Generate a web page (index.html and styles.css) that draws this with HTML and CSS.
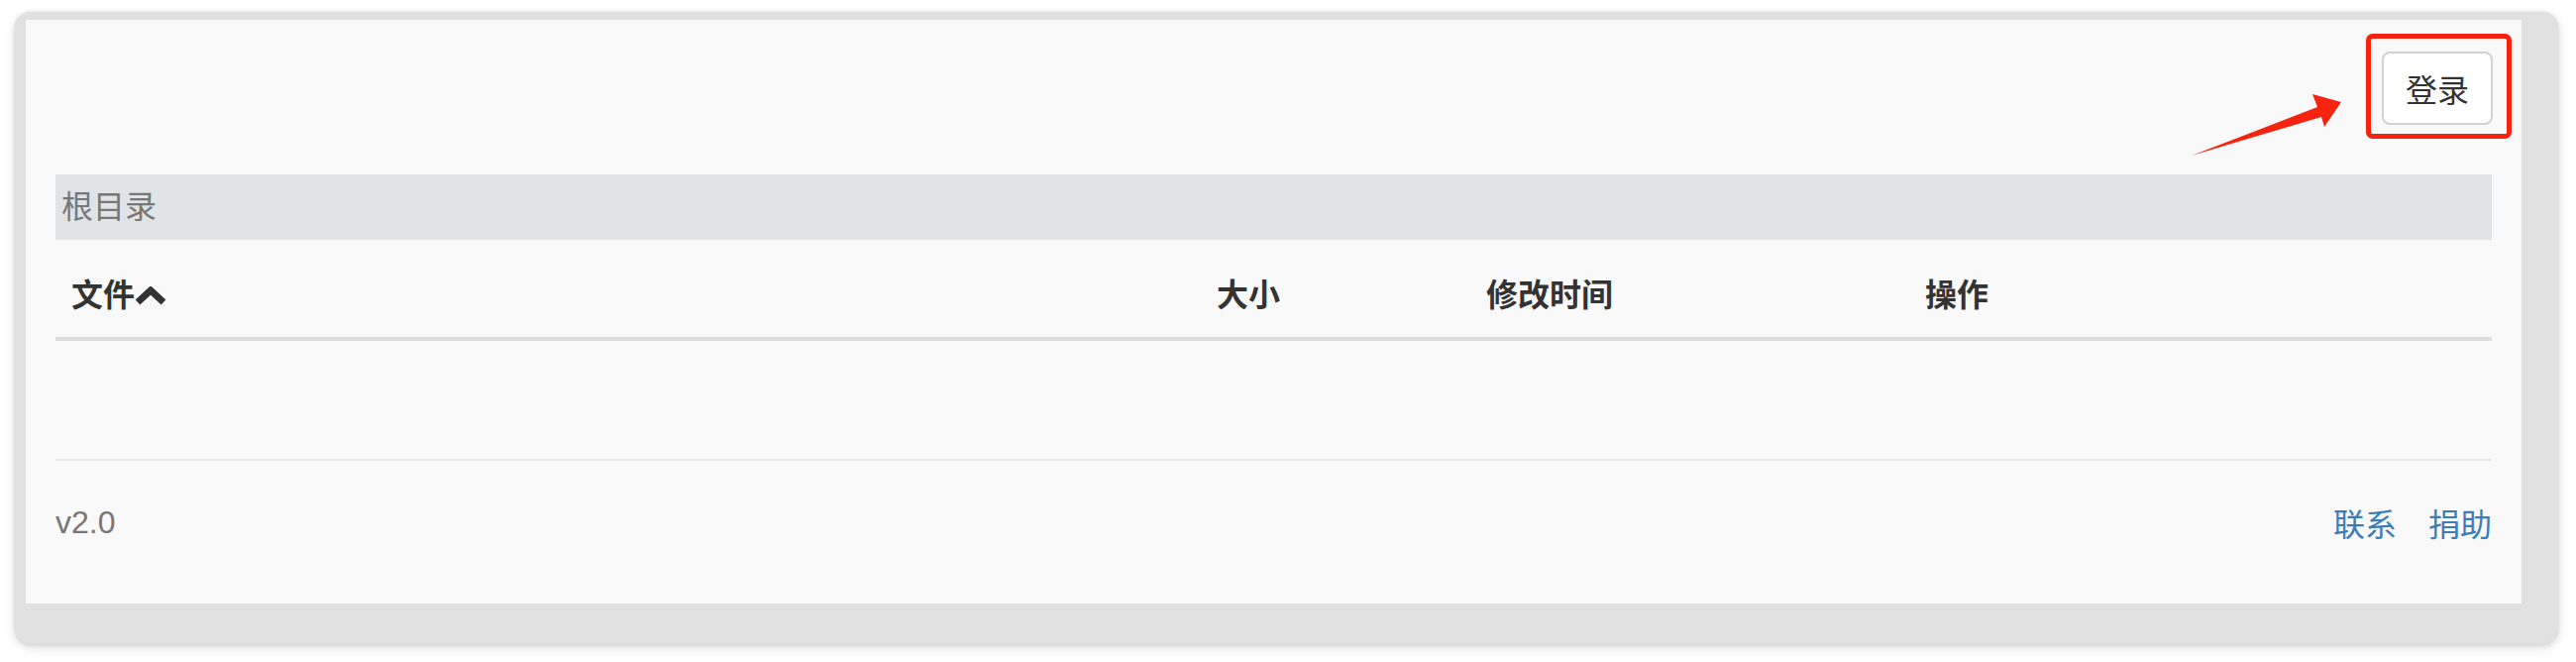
FILE: index.html
```html
<!DOCTYPE html>
<html lang="zh">
<head>
<meta charset="utf-8">
<title>根目录</title>
<link rel="stylesheet" href="styles.css">
</head>
<body>
<div class="window">
  <div class="page">
    <div class="topbar">
      <button class="btn-login">登录</button>
    </div>
    <div class="breadcrumb">根目录</div>
    <table class="files">
      <thead>
        <tr>
          <th class="col-name">文件<svg class="chev" width="32" height="20" viewBox="0 0 32 20"><polyline points="3,16 16,4 29,16" fill="none" stroke="#333" stroke-width="7" stroke-linejoin="miter"/></svg></th>
          <th class="col-size">大小</th>
          <th class="col-time">修改时间</th>
          <th class="col-op">操作</th>
        </tr>
      </thead>
      <tbody></tbody>
    </table>
    <div class="spacer"></div>
    <hr class="divider">
    <footer class="footer">
      <span class="version">v2.0</span>
      <nav class="links"><a href="#">联系</a><a href="#">捐助</a></nav>
    </footer>
  </div>
</div>
<svg class="annot" width="2600" height="668" viewBox="0 0 2600 668">
  <rect x="2390.5" y="36.5" width="142" height="101" rx="4" fill="none" stroke="#f6230f" stroke-width="5"/>
  <polygon points="2212,157 2339,108 2334,95 2363,103 2346,128 2343,118" fill="#f6230f"/>
</svg>
</body>
</html>
```
FILE: styles.css
```css
html, body {
  margin: 0;
  padding: 0;
  background: #ffffff;
}
body {
  position: relative;
  width: 2600px;
  height: 668px;
  overflow: hidden;
  font-family: "Liberation Sans", "Noto Sans CJK SC", sans-serif;
}
.window {
  box-sizing: border-box;
  margin: 12px 0 0 15px;
  width: 2567px;
  height: 638px;
  padding: 8px 37px 41px 11px;
  background: #e1e1e1;
  border-radius: 16px;
  box-shadow: 0 3px 10px rgba(0,0,0,0.16), 0 0 3px rgba(0,0,0,0.10);
}
.page {
  box-sizing: border-box;
  height: 589px;
  background: #f9f9f9;
  padding: 0 30px 0 30px;
  display: flex;
  flex-direction: column;
}
.topbar {
  display: flex;
  justify-content: flex-end;
  padding-top: 32px;
  height: 74px;
}
.btn-login {
  box-sizing: border-box;
  width: 112px;
  height: 74px;
  margin-right: -1px;
  background: #ffffff;
  border: 2px solid #d2d2d2;
  border-radius: 8px;
  color: #333;
  font-family: "Liberation Sans", "Noto Sans CJK SC", sans-serif;
  font-size: 32px;
  padding: 0;
}
.breadcrumb {
  margin-top: 50px;
  height: 66px;
  line-height: 66px;
  background: #e1e4e7;
  color: #777;
  font-size: 32px;
  padding-left: 6px;
}
.files {
  width: 100%;
  border-collapse: collapse;
  table-layout: fixed;
}
.files th {
  text-align: left;
  font-weight: bold;
  color: #333;
  font-size: 32px;
  line-height: 40px;
  padding: 36px 16px 22px 16px;
  border-bottom: 4px solid #dedede;
  white-space: nowrap;
}
.col-name { width: 1124px; }
.col-size { width: 240px; }
.col-time { width: 411px; }
.chev {
  vertical-align: 0px;
  margin-left: 0;
}
.spacer {
  height: 119px;
}
.divider {
  margin: 0;
  border: 0;
  border-top: 2px solid #e6e8eb;
}
.footer {
  display: flex;
  justify-content: space-between;
  align-items: center;
  height: 124px;
  font-size: 32px;
}
.version {
  color: #777;
}
.links {
  display: flex;
  gap: 32px;
}
.links a {
  color: #3a7db8;
  text-decoration: none;
}
.annot {
  position: absolute;
  left: 0;
  top: 0;
  pointer-events: none;
}
```
